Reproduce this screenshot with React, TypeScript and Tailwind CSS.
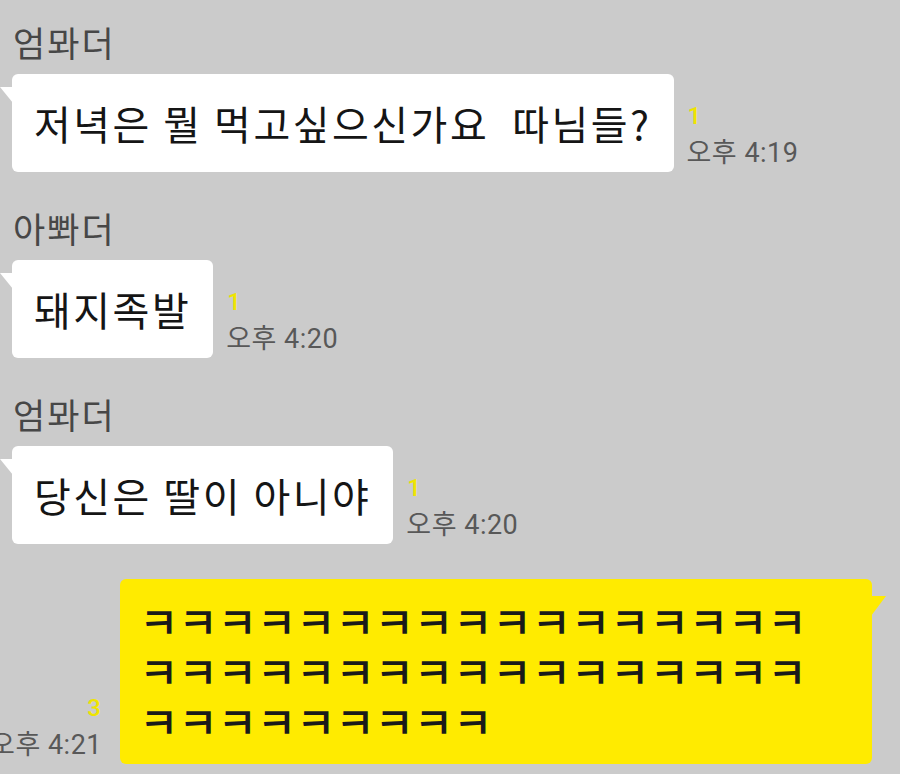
import React from "react";

const KR = "font-['Noto_Sans_CJK_KR',sans-serif]";
const META = "font-['Roboto','Noto_Sans_CJK_KR',sans-serif]";

interface Msg {
  name: string;
  text: string;
  read: string;
  time: string;
}

const messages: Msg[] = [
  { name: "엄뫄더", text: "저녁은 뭘 먹고싶으신가요  따님들?", read: "1", time: "오후 4:19" },
  { name: "아뽜더", text: "돼지족발", read: "1", time: "오후 4:20" },
  { name: "엄뫄더", text: "당신은 딸이 아니야", read: "1", time: "오후 4:20" },
];

const kk = (n: number) => "ㅋ".repeat(n);

function Received({ msg, first }: { msg: Msg; first?: boolean }) {
  return (
    <div className={first ? "" : "mt-[38px]"}>
      <div className={`${KR} pl-[1px] text-[35px] leading-[35px] tracking-[2px] text-[#474747]`}>{msg.name}</div>
      <div className="mt-[15px] flex items-end gap-[13px]">
        <div
          className={`${KR} relative shrink-0 whitespace-pre rounded-[6px] bg-white pl-[22px] pr-[22px] py-[29px] text-[40px] leading-[40px] tracking-[2.5px] text-[#151515]`}
        >
          <svg className="absolute -left-[12px] top-[13px]" width="13" height="16" viewBox="0 0 13 16">
            <polygon points="0,0 13,0 13,16" fill="#ffffff" />
          </svg>
          {msg.text}
        </div>
        <div className="flex shrink-0 flex-col pb-[4px]">
          <span className={`${META} ml-[1px] text-[24px] leading-[24px] font-medium text-[#efe400]`}>{msg.read}</span>
          <span className={`${META} mt-[10px] text-[27px] leading-[30px] tracking-[0.5px] text-[#585858]`}>{msg.time}</span>
        </div>
      </div>
    </div>
  );
}

export default function App() {
  return (
    <div className="h-[774px] w-[900px] overflow-hidden bg-[#cbcbcb] pl-[12px] pt-[24px]">
      {messages.map((m, i) => (
        <Received key={i} msg={m} first={i === 0} />
      ))}

      {/* 내가 보낸 메시지 */}
      <div className="-ml-[12px] mt-[35px] flex items-end justify-end gap-[18px] pr-[28px]">
        <div className="flex shrink-0 flex-col items-end pb-[4px]">
          <span className={`${META} mr-[1px] text-[24px] leading-[24px] font-medium text-[#efe400]`}>3</span>
          <span className={`${META} mt-[10px] text-[27px] leading-[30px] tracking-[0.5px] text-[#585858]`}>오후 4:21</span>
        </div>
        <div
          className={`${KR} relative w-[752px] shrink-0 rounded-[6px] bg-[#ffeb00] pl-[19px] pb-[19px] pt-[16px] text-[43px] font-medium leading-[50px] tracking-[-0.3px] text-[#1a1a1a]`}
        >
          <svg className="absolute -right-[14px] top-[17px]" width="15" height="20" viewBox="0 0 15 20">
            <polygon points="0,0 15,0 0,20" fill="#ffeb00" />
          </svg>
          <div>{kk(17)}</div>
          <div>{kk(17)}</div>
          <div>{kk(9)}</div>
        </div>
      </div>
    </div>
  );
}
